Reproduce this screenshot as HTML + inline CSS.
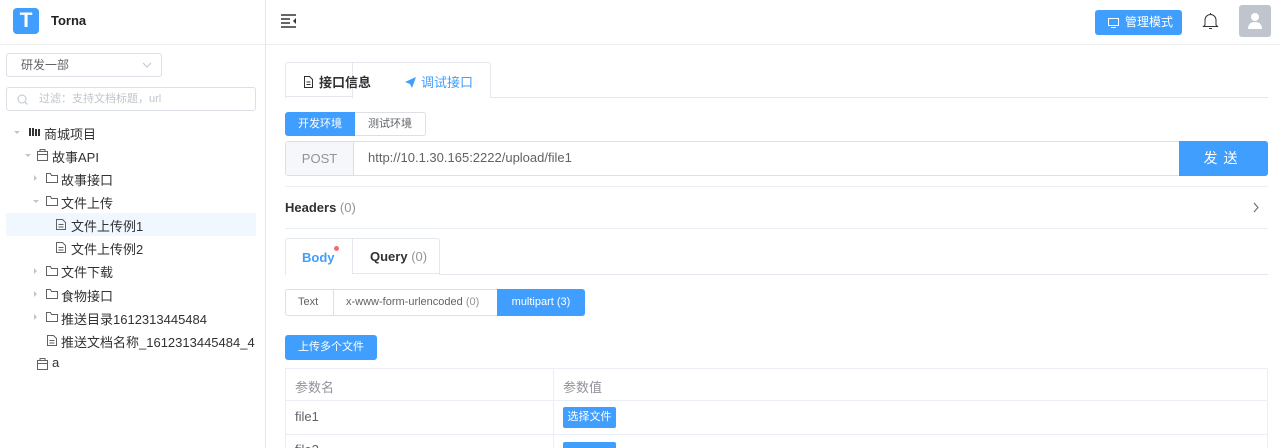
<!DOCTYPE html>
<html><head><meta charset="utf-8"><style>
*{box-sizing:border-box;margin:0;padding:0}
html,body{width:1280px;height:448px;overflow:hidden}
body{background:#fff;font-family:"Liberation Sans","Noto Sans CJK SC",sans-serif;color:#303133;position:relative}
.a{position:absolute}
.t{font-size:13px;color:#303133;white-space:nowrap}
.ic{display:inline-block;vertical-align:middle}
.blue{background:#409eff;color:#fff}
</style></head><body>
<!-- sidebar -->
<div class="a" style="left:265px;top:0;width:1px;height:448px;background:#e6e6e6"></div>
<div class="a" style="left:0;top:44px;width:265px;height:1px;background:#eee"></div>
<div class="a" style="left:13px;top:8px;width:26px;height:26px;border-radius:4px;background:#409eff;color:#fff;font-weight:bold;font-size:21px;text-align:center;line-height:26px">T</div>
<div class="a" style="left:51px;top:13px;font-size:13px;font-weight:bold;color:#222">Torna</div>
<div class="a" style="left:6px;top:53px;width:156px;height:24px;border:1px solid #dcdfe6;border-radius:3px;font-size:12px;color:#606266;line-height:22px;padding-left:14px">研发一部<svg class="a" style="right:9px;top:8px" width="10" height="6"><path d="M1 1l4 4 4-4" stroke="#c0c4cc" fill="none"/></svg></div>
<div class="a" style="left:6px;top:87px;width:250px;height:24px;border:1px solid #dcdfe6;border-radius:3px;font-size:11px;color:#c0c4cc;line-height:22px;padding-left:32px">过滤：支持文档标题，url<svg class="a" style="left:10px;top:6px" width="11" height="11"><circle cx="5" cy="5" r="4" stroke="#c0c4cc" fill="none"/><path d="M8 8l2.5 2.5" stroke="#c0c4cc"/></svg></div>
<div class="a" style="left:6px;top:213px;width:250px;height:23px;background:#f0f7ff"></div>
<svg class="a" style="left:0;top:120px" width="265" height="260" fill="none" stroke="#606266" stroke-width="1">
<path d="M14 11l3 3 3-3z" fill="#c0c4cc" stroke="none"/>
<path d="M25 34l3 3 3-3z" fill="#c0c4cc" stroke="none"/>
<path d="M34 55l3 3-3 3z M34 148l3 3-3 3z M34 171l3 3-3 3z M34 194l3 3-3 3z" fill="#c0c4cc" stroke="none"/>
<path d="M33 80l3 3 3-3z" fill="#c0c4cc" stroke="none"/>
<path d="M30 8v8M33 8v8M36 9v7M39 9v7" stroke="#333" stroke-width="2"/>
<rect x="37.5" y="31.5" width="10" height="9"/><path d="M40 31.5v-2h5v2M37.5 34.5h10"/>
<rect x="37.5" y="240.5" width="10" height="9"/><path d="M40 240.5v-2h5v2M37.5 243.5h10"/>
<path d="M46.5 53.5h4l1 2h6v7h-11z"/>
<path d="M46.5 76.5h4l1 2h6v7h-11z"/><path d="M46.5 146.5h4l1 2h6v7h-11z"/><path d="M46.5 169.5h4l1 2h6v7h-11z"/><path d="M46.5 192.5h4l1 2h6v7h-11z"/>
<path d="M56.5 99.5h6l3 3v7h-9zM58.5 104.5h5M58.5 107h5"/>
<path d="M56.5 122.5h6l3 3v7h-9zM58.5 127.5h5M58.5 130h5"/>
<path d="M47.5 215.5h6l3 3v7h-9zM49.5 220.5h5M49.5 223h5"/>
</svg>
<div class="a t" style="left:44px;top:124px">商城项目</div>
<div class="a t" style="left:52px;top:147px">故事API</div>
<div class="a t" style="left:61px;top:170px">故事接口</div>
<div class="a t" style="left:61px;top:193px">文件上传</div>
<div class="a t" style="left:71px;top:216px">文件上传例1</div>
<div class="a t" style="left:71px;top:239px">文件上传例2</div>
<div class="a t" style="left:61px;top:262px">文件下载</div>
<div class="a t" style="left:61px;top:286px">食物接口</div>
<div class="a t" style="left:61px;top:309px">推送目录1612313445484</div>
<div class="a t" style="left:61px;top:332px">推送文档名称_1612313445484_4</div>
<div class="a t" style="left:52px;top:355px">a</div>
<!-- header -->
<div class="a" style="left:266px;top:44px;width:1014px;height:1px;background:#eee"></div>
<svg class="a" style="left:281px;top:14px" width="16" height="14" stroke="#333" stroke-width="1.5"><path d="M0 1h15M0 5h9M0 9h9M0 13h15"/><path d="M15 4l-3 3 3 3z" fill="#333" stroke="none"/></svg>
<div class="a blue" style="left:1095px;top:10px;width:87px;height:25px;border-radius:3px;font-size:12px;line-height:25px;padding-left:30px">管理模式<svg class="a" style="left:13px;top:8px" width="11" height="10" stroke="#fff" fill="none"><rect x=".5" y=".5" width="10" height="7"/><path d="M3 9.5h5"/></svg></div>
<svg class="a" style="left:1202px;top:12px" width="17" height="18" stroke="#333" fill="none"><path d="M3 13V8a5.5 5.5 0 0111 0v5l1.5 1.5h-14z"/><path d="M8.5 2V1M7 16.5h3"/></svg>
<div class="a" style="left:1239px;top:5px;width:32px;height:32px;background:#c0c4cc;border-radius:3px"><svg width="32" height="32" fill="#fff"><circle cx="16" cy="12" r="4"/><path d="M9 24c0-5 3-7 7-7s7 2 7 7z"/></svg></div>
<!-- tabs -->
<div class="a" style="left:285px;top:97px;width:983px;height:1px;background:#e4e7ed"></div>
<div class="a" style="left:285px;top:62px;width:206px;height:36px;border:1px solid #e4e7ed;border-bottom:none;border-radius:3px 3px 0 0;background:#fff"></div>
<div class="a" style="left:352px;top:62px;width:1px;height:36px;background:#e4e7ed"></div>
<div class="a" style="left:285px;top:62px;width:67px;height:35px;border-bottom:1px solid #e4e7ed"></div>
<div class="a" style="left:303px;top:72px;font-size:13px;font-weight:bold;color:#303133"><svg class="ic" width="11" height="12" stroke="#303133" fill="none" style="margin-right:5px;margin-top:-3px"><path d="M1.5 .5h5l3 3v8h-8zM3.5 6h4M3.5 8.5h4"/></svg>接口信息</div>
<div class="a" style="left:405px;top:72px;font-size:13px;color:#409eff"><svg class="ic" width="11" height="11" fill="#409eff" style="margin-right:5px;margin-top:-3px"><path d="M0 5l11-5-4 11-2-4z"/></svg>调试接口</div>
<!-- env -->
<div class="a blue" style="left:285px;top:112px;width:70px;height:24px;border-radius:3px 0 0 3px;font-size:11px;line-height:24px;text-align:center">开发环境</div>
<div class="a" style="left:355px;top:112px;width:71px;height:24px;border:1px solid #dcdfe6;border-left:none;border-radius:0 3px 3px 0;font-size:11px;line-height:22px;text-align:center;color:#606266">测试环境</div>
<div class="a" style="left:285px;top:141px;width:983px;height:35px;border:1px solid #dcdfe6;border-radius:3px"></div>
<div class="a" style="left:286px;top:142px;width:68px;height:33px;background:#f5f7fa;border-right:1px solid #dcdfe6;font-size:13px;color:#909399;line-height:33px;text-align:center">POST</div>
<div class="a" style="left:368px;top:150px;font-size:13px;color:#606266">http://10.1.30.165:2222/upload/file1</div>
<div class="a blue" style="left:1179px;top:141px;width:89px;height:35px;border-radius:0 3px 3px 0;font-size:14px;line-height:35px;text-align:center;letter-spacing:6px">发送</div>
<div class="a" style="left:285px;top:186px;width:983px;height:1px;background:#ebeef5"></div>
<div class="a" style="left:285px;top:200px;font-size:13px;font-weight:bold;color:#303133">Headers <span style="font-weight:normal;color:#909399">(0)</span></div>
<svg class="a" style="left:1252px;top:202px" width="8" height="11" stroke="#606266" fill="none"><path d="M2 1l4 4.5L2 10"/></svg>
<div class="a" style="left:285px;top:228px;width:983px;height:1px;background:#ebeef5"></div>
<!-- body tabs -->
<div class="a" style="left:285px;top:274px;width:983px;height:1px;background:#e4e7ed"></div>
<div class="a" style="left:285px;top:238px;width:155px;height:37px;border:1px solid #e4e7ed;border-bottom:none;border-radius:3px 3px 0 0;background:#fff"></div>
<div class="a" style="left:352px;top:238px;width:88px;height:36px;border-left:1px solid #e4e7ed;border-bottom:1px solid #e4e7ed"></div>
<div class="a" style="left:302px;top:250px;font-size:13px;font-weight:bold;color:#409eff">Body</div>
<div class="a" style="left:334px;top:246px;width:5px;height:5px;border-radius:50%;background:#f56c6c"></div>
<div class="a" style="left:370px;top:249px;font-size:13px;font-weight:bold;color:#303133">Query <span style="font-weight:normal;color:#909399">(0)</span></div>
<!-- radios -->
<div class="a" style="left:285px;top:289px;width:300px;height:27px;border:1px solid #dcdfe6;border-radius:3px"></div>
<div class="a" style="left:333px;top:289px;width:1px;height:27px;background:#dcdfe6"></div>
<div class="a" style="left:298px;top:296px;font-size:11px;color:#606266">Text</div>
<div class="a" style="left:346px;top:296px;font-size:11px;color:#606266">x-www-form-urlencoded <span style="color:#909399">(0)</span></div>
<div class="a blue" style="left:497px;top:289px;width:88px;height:27px;border-radius:0 3px 3px 0;font-size:11px;line-height:27px;text-align:center">multipart (3)</div>
<div class="a blue" style="left:285px;top:335px;width:92px;height:25px;border-radius:3px;font-size:11px;line-height:25px;text-align:center">上传多个文件</div>
<!-- table -->
<div class="a" style="left:285px;top:368px;width:983px;height:90px;border:1px solid #ebeef5"></div>
<div class="a" style="left:553px;top:368px;width:1px;height:90px;background:#ebeef5"></div>
<div class="a" style="left:285px;top:400px;width:983px;height:1px;background:#ebeef5"></div>
<div class="a" style="left:285px;top:434px;width:983px;height:1px;background:#ebeef5"></div>
<div class="a" style="left:295px;top:377px;font-size:13px;color:#909399">参数名</div>
<div class="a" style="left:563px;top:377px;font-size:13px;color:#909399">参数值</div>
<div class="a" style="left:295px;top:409px;font-size:13px;color:#606266">file1</div>
<div class="a blue" style="left:563px;top:407px;width:53px;height:21px;border-radius:2px;font-size:11px;line-height:21px;text-align:center">选择文件</div>
<div class="a" style="left:295px;top:442px;font-size:13px;color:#606266">file2</div>
<div class="a blue" style="left:563px;top:442px;width:53px;height:21px;border-radius:2px"></div>
</body></html>
